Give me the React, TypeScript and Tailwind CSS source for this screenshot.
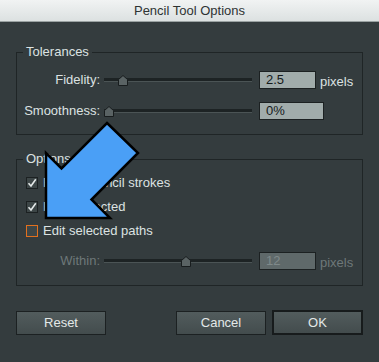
import React from "react";

function Slider({ pos }: { pos: number }) {
  return (
    <div className="relative flex h-[18px] w-[148px] items-center">
      <div className="h-[4px] w-full border-b border-[#4b5455] bg-[#1d2324]" />
      <svg
        className="absolute top-[4px]"
        style={{ left: pos }}
        width="10"
        height="11"
        viewBox="0 0 10 11"
      >
        <path d="M0.5 10.5V4.5L5 0.5L9.5 4.5V10.5Z" fill="#5a6364" stroke="#181d1e" />
      </svg>
    </div>
  );
}

function Field({ value, width, disabled }: { value: string; width: string; disabled?: boolean }) {
  return (
    <div
      className={
        "flex h-[18px] items-center border border-[#1c2122] pl-[6px] text-[13px] " +
        width +
        (disabled ? " bg-[#5f696a] text-[#7f898a]" : " bg-[#a1acab] text-[#151a1b]")
      }
    >
      {value}
    </div>
  );
}

function Check({ checked, focused, label }: { checked?: boolean; focused?: boolean; label: string }) {
  return (
    <div className="flex h-[16px] items-center gap-[5px]">
      <div
        className={
          "flex h-[12px] w-[12px] items-center justify-center bg-[#3d4647] " +
          (focused ? "border border-[#e2701e]" : "border border-[#1c2122]")
        }
      >
        {checked && (
          <svg width="10" height="10" viewBox="0 0 10 10">
            <path d="M1.5 5.2L4 8L8.8 1.2" fill="none" stroke="#e4e9e9" strokeWidth="1.6" />
          </svg>
        )}
      </div>
      <span>{label}</span>
    </div>
  );
}

export default function App() {
  return (
    <div className="relative h-[362px] w-[379px] overflow-hidden bg-[#343c3e] font-['Liberation_Sans',Arial,sans-serif] text-[13px] leading-[16px] text-[#dce2e2]">
      {/* title bar */}
      <div className="flex h-[22px] items-center justify-center border-b border-[#9aa2a2] bg-gradient-to-b from-[#f1f3f3] to-[#dce1e1] text-[13px] text-[#2e3333]">
        Pencil Tool Options
      </div>

      <div className="px-[16px]">
        <fieldset className="mt-[22px] border border-[#1f2526] pb-[14px]">
          <legend className="ml-[6px] px-[3px] leading-[16px]">Tolerances</legend>
          <div className="flex flex-col gap-[12px] pt-[10px]">
            <div className="flex items-center">
              <span className="w-[83px] text-right">Fidelity:</span>
              <div className="ml-[4px]">
                <Slider pos={14} />
              </div>
              <div className="ml-[7px]">
                <Field value="2.5" width="w-[57px]" />
              </div>
              <span className="ml-[4px] mt-[4px]">pixels</span>
            </div>
            <div className="flex items-center">
              <span className="w-[83px] text-right">Smoothness:</span>
              <div className="ml-[4px]">
                <Slider pos={0} />
              </div>
              <div className="ml-[7px]">
                <Field value="0%" width="w-[65px]" />
              </div>
            </div>
          </div>
        </fieldset>

        <fieldset className="mt-[16px] border border-[#1f2526] pb-[14px]">
          <legend className="ml-[6px] px-[3px] leading-[16px]">Options</legend>
          <div className="flex flex-col gap-[8px] pl-[9px] pt-[8px]">
            <Check checked label="Fill new pencil strokes" />
            <Check checked label="Keep selected" />
            <Check focused label="Edit selected paths" />
          </div>
          <div className="mt-[12px] flex items-center text-[#6e7879]">
            <span className="w-[83px] text-right">Within:</span>
            <div className="ml-[4px]">
              <Slider pos={77} />
            </div>
            <div className="ml-[7px]">
              <Field value="12" width="w-[57px]" disabled />
            </div>
            <span className="ml-[4px] mt-[4px]">pixels</span>
          </div>
        </fieldset>

        <div className="mt-[24px] flex items-center">
          <button className="h-[24px] w-[90px] border border-[#1c2122] bg-gradient-to-b from-[#525c5d] to-[#434c4d] text-[#e3e8e8]">
            Reset
          </button>
          <button className="ml-auto h-[24px] w-[90px] border border-[#1c2122] bg-gradient-to-b from-[#525c5d] to-[#434c4d] text-[#e3e8e8]">
            Cancel
          </button>
          <button className="ml-[6px] h-[25px] w-[91px] border-2 border-[#171b1c] bg-gradient-to-b from-[#525c5d] to-[#434c4d] text-[#e3e8e8]">
            OK
          </button>
        </div>
      </div>

      {/* callout arrow laid over the dialog */}
      <svg className="pointer-events-none absolute left-0 top-0" width="379" height="362">
        <polygon
          points="107,123 138,153 91.5,199.5 110,218 46,218 46,153 61.5,168.5"
          fill="#4a9ff6"
          stroke="#000"
          strokeWidth="2.5"
          strokeLinejoin="miter"
        />
      </svg>
    </div>
  );
}
